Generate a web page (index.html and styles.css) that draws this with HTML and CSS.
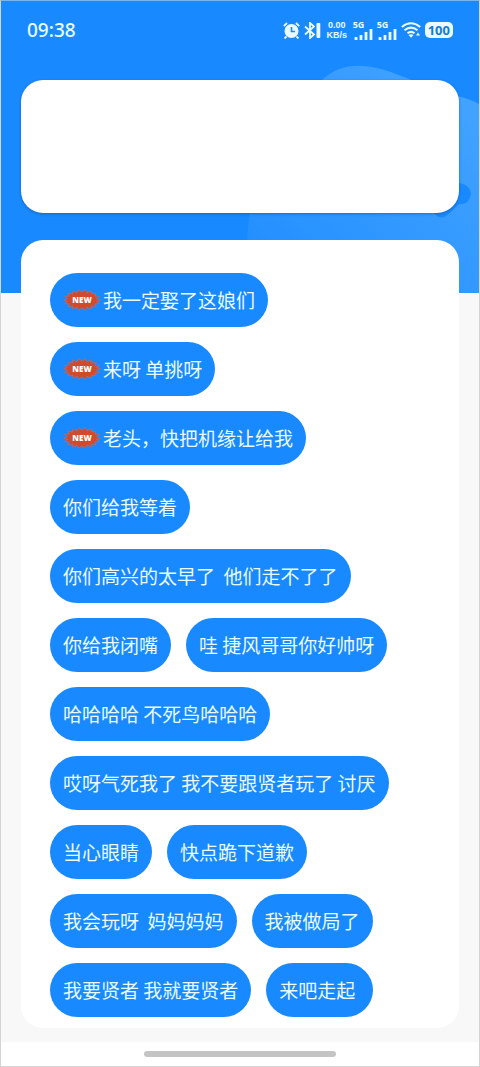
FILE: index.html
```
<!DOCTYPE html>
<html lang="zh-CN">
<head>
<meta charset="utf-8">
<meta name="viewport" content="width=device-width, initial-scale=1">
<title>语音列表</title>
<link rel="stylesheet" href="styles.css">
</head>
<body>
<svg class="symbols" aria-hidden="true">
  <symbol id="new-badge" viewBox="0 0 38 22">
    <path d="M37.500 11L33.300 12.400 36.400 14.600 31.600 14.900 33.200 17.700 28.300 17 28.200 20.100 24 18.300 22.200 21.300 19 18.800 15.800 21.300 14 18.300 9.800 20.100 9.700 17 4.800 17.700 6.400 14.900 1.600 14.600 4.700 12.400.5 11 4.700 9.600 1.600 7.400 6.400 7.100 4.800 4.300 9.700 5 9.800 1.900 14 3.700 15.800.7 19 3.200 22.200.7 24 3.700 28.200 1.900 28.300 5 33.200 4.300 31.600 7.100 36.400 7.400 33.300 9.600Z" fill="#d14a2c" stroke="#a8727c" stroke-width=".7"/>
  </symbol>
  <symbol id="signal" viewBox="0 0 19 12">
    <path d="M2 9V12M7 7V12M12 4V12M17 1V12" stroke="#e9fbff" stroke-width="2.800"/>
  </symbol>
</svg>
<div class="screen">
  <svg class="backdrop" viewBox="0 0 480 292" preserveAspectRatio="xMaxYMin slice" aria-hidden="true">
    <defs>
      <linearGradient id="wave" x1="0" y1="1" x2="1" y2="0">
        <stop offset="0" stop-color="#1f8dff"/>
        <stop offset="1" stop-color="#46a5ff"/>
      </linearGradient>
    </defs>
    <path fill="#1989ff" d="M0 0h480v292H0z"/>
    <path fill="url(#wave)" d="M255 292C243 255 247 190 270 160C300 130 300 100 322 80C341 61 366 62 392 71C416 80 437 90 459 95Q471 98 480 103V292Z"/>
    <path fill="#1989ff" d="M430 190C442 181 454 182 461 182Q472 185 472 193Q470 204 460 203Q452 211 447 215Q441 219 436 213Z"/>
  </svg>
  <header class="status">
    <time class="clock">09:38</time>
    <div class="indicators">
      <svg class="alarm" viewBox="0 0 17 17" role="img" aria-label="闹钟">
        <circle cx="8.500" cy="9" r="7" fill="#e9fbff"/>
        <path d="M.8 4.200L4 1M13 1l3.200 3.200M3.500 14.500L1.500 16.500M13.500 14.500l2 2" stroke="#e9fbff" stroke-width="1.800"/>
        <path d="M8.500 5v4.500H12" fill="none" stroke="#1989ff" stroke-width="1.600"/>
      </svg>
      <svg class="bluetooth" viewBox="0 0 17 17" role="img" aria-label="蓝牙">
        <path d="M1 4.500l9 8L6 16V1l4 3.500-9 8" fill="none" stroke="#e9fbff" stroke-width="1.800"/>
        <rect x="12.500" y="1" width="3.800" height="15" rx="1" fill="#e9fbff"/>
      </svg>
      <div class="speed"><span>0.00</span><span>KB/s</span></div>
      <div class="network"><span>5G</span><svg class="bars"><use href="#signal"/></svg></div>
      <div class="network"><span>5G</span><svg class="bars"><use href="#signal"/></svg></div>
      <svg class="wifi" viewBox="0 0 20 16" role="img" aria-label="无线网络">
        <path d="M.8 5Q10-2.500 19.200 5M3.500 8.300Q10 3 16.500 8.300M6.500 11.300Q10 8.500 13.500 11.300" fill="none" stroke="#e9fbff" stroke-width="2"/>
        <path d="M7.500 13Q10 11.500 12.500 13L10 15.800ZM17 10.500l2 3h-4z" fill="#e9fbff"/>
      </svg>
      <span class="battery">100</span>
    </div>
  </header>
  <main class="content">
    <section class="card banner"></section>
    <section class="card phrases">
      <button class="pill"><span class="badge"><svg class="burst" aria-hidden="true"><use href="#new-badge"/></svg><span class="badge-text">NEW</span></span>我一定娶了这娘们</button>
      <button class="pill"><span class="badge"><svg class="burst" aria-hidden="true"><use href="#new-badge"/></svg><span class="badge-text">NEW</span></span>来呀 单挑呀</button>
      <button class="pill"><span class="badge"><svg class="burst" aria-hidden="true"><use href="#new-badge"/></svg><span class="badge-text">NEW</span></span>老头，快把机缘让给我</button>
      <button class="pill">你们给我等着</button>
      <button class="pill">你们高兴的太早了  他们走不了了</button>
      <button class="pill">你给我闭嘴</button>
      <button class="pill">哇 捷风哥哥你好帅呀</button>
      <button class="pill">哈哈哈哈 不死鸟哈哈哈</button>
      <button class="pill">哎呀气死我了 我不要跟贤者玩了 讨厌</button>
      <button class="pill">当心眼睛</button>
      <button class="pill">快点跪下道歉</button>
      <button class="pill">我会玩呀  妈妈妈妈</button>
      <button class="pill">我被做局了</button>
      <button class="pill">我要贤者 我就要贤者</button>
      <button class="pill">来吧走起 </button>
    </section>
  </main>
  <footer class="gesture"><span class="handle"></span></footer>
</div>
</body>
</html>
```
FILE: styles.css
```
* {
  box-sizing: border-box;
}

body {
  margin: 0;
  background: #f8f8f8;
  font-family: "Noto Sans CJK SC", "Noto Sans", sans-serif;
}

.symbols {
  display: none;
}

.screen {
  position: relative;
  display: flex;
  flex-direction: column;
  min-height: 100vh;
  border: 1px solid #d4d4d4;
  border-top-color: #78b6ee;
}

.backdrop {
  position: absolute;
  top: 0;
  left: 0;
  width: 100%;
  height: 292px;
}

.status {
  position: relative;
  display: flex;
  align-items: center;
  justify-content: space-between;
  height: 58px;
  padding: 0 26px;
  color: #e9fbff;
}

.clock {
  font: 500 19px/24px "Noto Sans", sans-serif;
}

.indicators {
  display: flex;
  align-items: center;
  gap: 4px;
  font-family: "Noto Sans", sans-serif;
  font-weight: 700;
}

.alarm,
.bluetooth {
  width: 17px;
  height: 17px;
}

.speed {
  display: flex;
  flex-direction: column;
  align-items: center;
  width: 24px;
  font-family: "Liberation Sans", sans-serif;
  font-size: 9px;
  line-height: 10px;
}

.network {
  display: flex;
  flex-direction: column;
  width: 20px;
  font-size: 9px;
  line-height: 7px;
}

.bars {
  align-self: flex-end;
  width: 19px;
  height: 12px;
}

.wifi {
  width: 20px;
  height: 16px;
}

.battery {
  padding: 0 3px;
  border-radius: 5px;
  background: #e9fbff;
  color: #1979d8;
  font-size: 13px;
  line-height: 16px;
}

.content {
  position: relative;
  display: flex;
  flex: 1;
  flex-direction: column;
  gap: 27px;
  padding: 21px 20px 14px;
}

.card {
  border-radius: 22px;
  background: #fff;
}

.banner {
  height: 133px;
  box-shadow: 0 1px 3px rgba(0, 50, 120, 0.4);
}

.phrases {
  display: flex;
  flex-wrap: wrap;
  align-content: flex-start;
  gap: 15px;
  padding: 33px 29px 11px;
}

.pill {
  display: flex;
  align-items: center;
  height: 54px;
  padding: 0 13px;
  border: 0;
  border-radius: 27px;
  background: #1989ff;
  color: #e9fbff;
  font: 400 19px/28px "Noto Sans CJK SC", sans-serif;
  white-space: pre;
}

.badge {
  display: grid;
  place-items: center;
  width: 38px;
  margin-right: 2px;
}

.burst,
.badge-text {
  grid-area: 1 / 1;
}

.burst {
  width: 38px;
  height: 22px;
}

.badge-text {
  color: #fff;
  font: 800 8px/10px "Open Sans", sans-serif;
}

.gesture {
  position: relative;
  display: flex;
  align-items: center;
  justify-content: center;
  height: 24px;
  background: #fff;
}

.handle {
  width: 40%;
  height: 6px;
  border-radius: 3px;
  background: #c4c4c4;
}
```
